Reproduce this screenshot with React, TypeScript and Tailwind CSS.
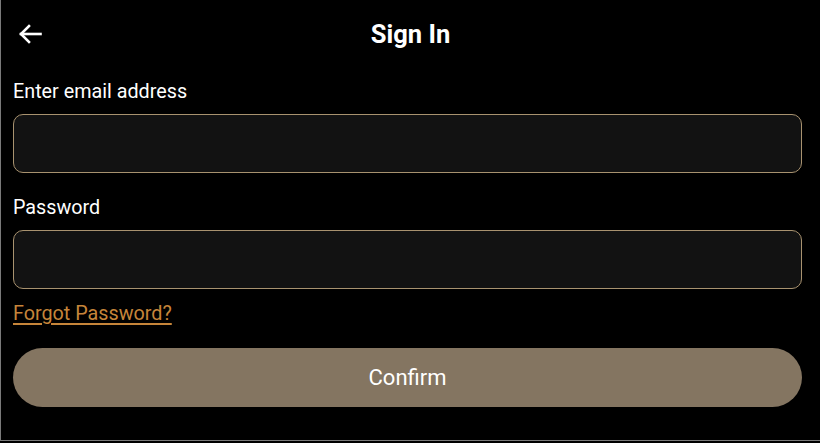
function Field({ label }: { label: string }) {
  return (
    <div className="flex flex-col">
      <label className="text-[19.75px] leading-[22px] text-white">{label}</label>
      <input
        type="text"
        className="mt-[11px] h-[59px] w-full rounded-[10px] border border-[#a8926f] bg-[#121212] px-4 text-white outline-none"
      />
    </div>
  );
}

export default function App() {
  return (
    <div className="h-[443px] w-[820px] bg-black" style={{ fontFamily: "Roboto, 'Liberation Sans', sans-serif" }}>
      <div className="h-[441px] border-b border-l border-[#7a7a7a] bg-black">
        <header className="relative flex h-[68px] items-center justify-center">
          <button className="absolute left-[17px] top-[23px] text-white">
            <svg width="26" height="22" viewBox="0 0 26 22" fill="none" stroke="currentColor" strokeWidth="2.6" strokeLinecap="square">
              <path d="M3 11H22.5" />
              <path d="M11 3L3 11L11 19" />
            </svg>
          </button>
          <h1 className="text-[25.5px] font-bold text-white">Sign In</h1>
        </header>
        <div className="ml-[12px] flex w-[789px] flex-col">
          <div className="mt-[13px]">
            <Field label="Enter email address" />
          </div>
          <div className="mt-[24px]">
            <Field label="Password" />
          </div>
          <a href="#" className="mt-[14px] self-start text-[19.75px] leading-[22px] text-[#c6853a] underline decoration-[1.5px] underline-offset-[3px]">
            Forgot Password?
          </a>
          <button className="mt-[23px] h-[59px] w-full rounded-full bg-[#847561] text-[22px] text-white">
            Confirm
          </button>
        </div>
      </div>
    </div>
  );
}
